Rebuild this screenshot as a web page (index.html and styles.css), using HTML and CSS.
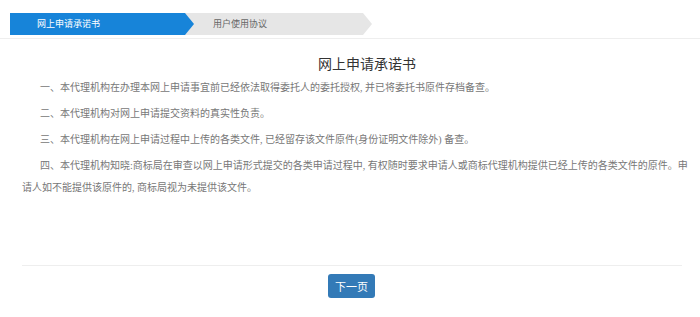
FILE: index.html
```html
<!DOCTYPE html>
<html lang="zh-CN">
<head>
    <meta charset="UTF-8">
    <meta name="viewport" content="width=device-width, initial-scale=1.0">
    <title>网上申请承诺书</title>
    <link rel="stylesheet" href="styles.css">
</head>
<body>
    <header class="steps">
        <div class="step step-active">网上申请承诺书</div>
        <div class="step">用户使用协议</div>
    </header>

    <main class="promise">
        <div class="promise-body">
            <h1 class="promise-title">网上申请承诺书</h1>
            <p>一、本代理机构在办理本网上申请事宜前已经依法取得委托人的委托授权, 并已将委托书原件存档备查。</p>
            <p>二、本代理机构对网上申请提交资料的真实性负责。</p>
            <p>三、本代理机构在网上申请过程中上传的各类文件, 已经留存该文件原件(身份证明文件除外) 备查。</p>
            <p>四、本代理机构知晓:商标局在审查以网上申请形式提交的各类申请过程中, 有权随时要求申请人或商标代理机构提供已经上传的各类文件的原件。申请人如不能提供该原件的, 商标局视为未提供该文件。</p>
        </div>

        <div class="promise-actions">
            <button type="button" class="btn-next">下一页</button>
        </div>
    </main>
</body>
</html>
```

FILE: styles.css
```css
body {
    margin: 0;
    padding: 0;
    background-color: #fff;
    font-family: "Liberation Serif", "Noto Sans CJK SC", serif;
    color: #777;
}

.steps {
    display: flex;
    padding: 13px 0 3px 10px;
    border-bottom: 1px solid #eee;
}

.step {
    position: relative;
    height: 22px;
    line-height: 22px;
    width: 178px;
    padding-left: 28px;
    box-sizing: border-box;
    background-color: #e6e6e6;
    color: #666;
    font-family: "Noto Sans CJK SC", sans-serif;
    font-size: 9px;
}

.step::after {
    content: "";
    position: absolute;
    top: 0;
    right: -9px;
    border-top: 11px solid transparent;
    border-bottom: 11px solid transparent;
    border-left: 9px solid #e6e6e6;
}

.step-active {
    width: 175px;
    padding-left: 27px;
    background-color: #1784d9;
    color: #fff;
    z-index: 1;
}

.step-active::after {
    border-left-color: #1784d9;
}

.promise {
    padding: 0 12px 0 22px;
}

.promise-body {
    min-height: 212px;
    margin-right: 6px;
    border-bottom: 1px solid #eee;
}

.promise-body p {
    margin: 0 -6px 4px 0;
    font-size: 10px;
    line-height: 22px;
    text-indent: 18px;
}

.promise-title {
    margin: 14px 0 4px;
    padding-left: 30px;
    text-align: center;
    font-family: "Noto Sans CJK SC", sans-serif;
    font-size: 14px;
    font-weight: normal;
    line-height: 20px;
    color: #333;
}

.promise-actions {
    display: flex;
    justify-content: center;
    padding: 8px 7px 0 0;
}

.btn-next {
    width: 47px;
    height: 24px;
    padding: 0;
    border: none;
    border-radius: 3px;
    background-color: #337ab7;
    color: #fff;
    font-family: "Noto Sans CJK SC", sans-serif;
    font-size: 11px;
    cursor: pointer;
}
```
